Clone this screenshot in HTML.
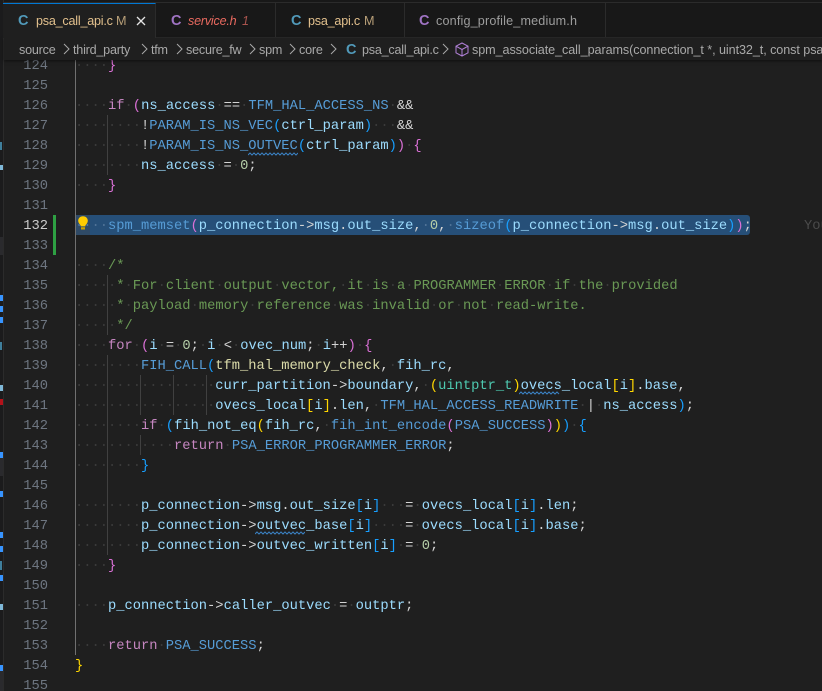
<!DOCTYPE html>
<html><head><meta charset="utf-8"><style>
html,body{margin:0;padding:0;background:#1f1f1f;width:822px;height:691px;overflow:hidden}
#r{position:relative;width:822px;height:691px;overflow:hidden;background:#1f1f1f}
.a{position:absolute}
#code,#nums{position:absolute;top:57px;font:13.75px/20px "Liberation Mono",monospace;color:#d4d4d4}
#code{left:75px;height:634px;overflow:hidden}
#code div{height:20px;white-space:pre}
#nums{left:0;width:48px;height:634px;overflow:hidden;text-align:right;color:#6e7681}
#nums div{height:20px}
#code b{font-weight:normal}
#code i{font-style:normal;color:#3a3a3a}
.sel i{color:#4f7296!important}
.k{color:#c586c0}.m{color:#569cd6}.v{color:#9cdcfe}.f{color:#dcdcaa}.n{color:#b5cea8}.c{color:#6a9955}.t{color:#4ec9b0}.g{color:#ffd700}.p{color:#da70d6}.l{color:#179fff}
.tab{position:absolute;top:3px;height:34px;background:#181818;border-right:1px solid #2b2b2b;box-sizing:border-box}
.tt{position:absolute;top:13px;font:12.6px/16px "Liberation Sans",sans-serif;white-space:pre;letter-spacing:-.22px}
.ic{position:absolute;top:12px;font:bold 14.5px/18px "Liberation Sans",sans-serif}
.bc{position:absolute;top:42px;font:12.6px/16px "Liberation Sans",sans-serif;color:#a9a9a9;white-space:pre;letter-spacing:-.22px}
.gd{position:absolute;width:1px;background:#404040}
.mk{position:absolute;left:0;width:3px;background:#3794ff}
.dm{position:absolute;left:0;width:3px;background:#2a2a2d}
</style></head><body><div id="r">

<!-- tab bar -->
<div class="a" style="left:0;top:0;width:822px;height:37px;background:#181818"></div>
<div class="a" style="left:0;top:2px;width:822px;height:1px;background:#2b2b2b"></div>
<div class="a" style="left:0;top:37px;width:822px;height:1px;background:#2b2b2b"></div>
<div class="tab" style="left:3px;width:153px;background:#1f1f1f;border-top:1px solid #0078d4;height:35px;z-index:1"></div>
<div class="tab" style="left:156px;width:120px"></div>
<div class="tab" style="left:276px;width:129px"></div>
<div class="tab" style="left:405px;width:201px"></div>
<div style="position:absolute;left:0;top:0;width:822px;height:37px;z-index:2">
<span class="ic" style="left:18px;color:#519aba">C</span>
<span class="tt" style="left:36px;color:#e2c08d">psa_call_api.c</span>
<span class="tt" style="left:116px;color:#b89f78">M</span>
<svg class="a" style="left:136px;top:16px" width="10" height="10" viewBox="0 0 10 10"><path d="M1 1L9 9M9 1L1 9" stroke="#e4e4e4" stroke-width="1.3" fill="none"/></svg>
<span class="ic" style="left:171px;color:#a074c4">C</span>
<span class="tt" style="left:188px;color:#e8695f;font-style:italic">service.h</span>
<span class="tt" style="left:242px;color:#a9544e;font-style:italic">1</span>
<span class="ic" style="left:291px;color:#519aba">C</span>
<span class="tt" style="left:308px;color:#e2c08d">psa_api.c</span>
<span class="tt" style="left:364px;color:#b89f78">M</span>
<span class="ic" style="left:419px;color:#a074c4">C</span>
<span class="tt" style="left:436px;color:#9d9d9d;letter-spacing:.17px">config_profile_medium.h</span>
</div>

<!-- left strip -->
<div class="a" style="left:0;top:0;width:3px;height:691px;background:#1b1b1c"></div>
<div class="a" style="left:3px;top:0;width:1px;height:691px;background:#2b2b2b"></div>
<div class="dm" style="top:237px;height:18px"></div>
<div class="dm" style="top:458px;height:18px"></div>
<div class="dm" style="top:671px;height:20px"></div>
<div class="mk" style="top:295px;height:6px"></div>
<div class="mk" style="top:306px;height:6px"></div>
<div class="mk" style="top:317px;height:6px"></div>
<div class="mk" style="top:452px;height:6px"></div>
<div class="mk" style="top:491px;height:6px"></div>
<div class="mk" style="top:532px;height:6px"></div>
<div class="mk" style="top:546px;height:6px"></div>
<div class="mk" style="top:575px;height:6px"></div>
<div class="mk" style="top:665px;height:6px"></div>
<div class="mk" style="top:399px;height:6px;background:#b3121a"></div>
<div class="mk" style="top:142px;height:8px;width:2px;background:#3f7f9c"></div>
<div class="mk" style="top:165px;height:5px;background:#7fb8d8"></div>
<div class="mk" style="top:342px;height:8px;width:2px;background:#3f7f9c"></div>
<div class="mk" style="top:385px;height:6px;background:#7fb8d8"></div>
<div class="mk" style="top:561px;height:9px;width:2px;background:#3f7f9c"></div>
<div class="mk" style="top:604px;height:6px;background:#7fb8d8"></div>

<!-- diff bar -->
<div class="a" style="left:53px;top:215px;width:3px;height:40px;background:#2ea043"></div>

<!-- selection -->
<div class="a" style="left:75px;top:215px;width:675px;height:20px;background:#264f78;border-radius:0 3px 3px 0"></div>

<!-- indent guides -->
<div class="gd" style="left:75px;top:55px;height:600px;background:#707070"></div>
<div class="gd" style="left:107px;top:115px;height:60px"></div>
<div class="gd" style="left:107px;top:275px;height:60px"></div>
<div class="gd" style="left:107px;top:355px;height:200px"></div>
<div class="gd" style="left:140px;top:375px;height:40px"></div>
<div class="gd" style="left:140px;top:435px;height:20px"></div>
<div class="gd" style="left:173px;top:375px;height:40px"></div>
<div class="gd" style="left:206px;top:375px;height:40px"></div>

<!-- bulb -->
<div class="a" style="left:76px;top:215px;width:14px;height:20px;background:#2f4a66"></div>
<svg class="a" style="left:77px;top:215px" width="12" height="16" viewBox="0 0 12 16"><path d="M6 1.2C3 1.2 1.2 3.3 1.2 5.8c0 1.9 1.1 3 1.9 4 .4.5.6 1 .6 1.6h4.6c0-.6.2-1.1.6-1.6.8-1 1.900-2.100 1.900-4C10.800 3.300 9 1.200 6 1.200z" fill="#ffcc00"/><rect x="4" y="12.200" width="4" height="2.300" fill="#c9a200"/></svg>

<!-- line numbers -->
<div id="nums"><div>124</div><div>125</div><div>126</div><div>127</div><div>128</div><div>129</div><div>130</div><div>131</div><div style="color:#cccccc">132</div><div>133</div><div>134</div><div>135</div><div>136</div><div>137</div><div>138</div><div>139</div><div>140</div><div>141</div><div>142</div><div>143</div><div>144</div><div>145</div><div>146</div><div>147</div><div>148</div><div>149</div><div>150</div><div>151</div><div>152</div><div>153</div><div>154</div><div>155</div></div>

<!-- code -->
<div id="code">
<div><i>····</i><b class="p">}</b></div>
<div></div>
<div><i>····</i><b class="k">if</b><i>·</i><b class="p">(</b><b class="v">ns_access</b><i>·</i>==<i>·</i><b class="m">TFM_HAL_ACCESS_NS</b><i>·</i>&amp;&amp;</div>
<div><i>········</i>!<b class="m">PARAM_IS_NS_VEC</b><b class="l">(</b><b class="v">ctrl_param</b><b class="l">)</b><i>···</i>&amp;&amp;</div>
<div><i>········</i>!<b class="m">PARAM_IS_NS_OUTVEC</b><b class="l">(</b><b class="v">ctrl_param</b><b class="l">)</b><b class="p">)</b><i>·</i><b class="p">{</b></div>
<div><i>········</i><b class="v">ns_access</b><i>·</i>=<i>·</i><b class="n">0</b>;</div>
<div><i>····</i><b class="p">}</b></div>
<div></div>
<div class="sel"><i>····</i><b class="m">spm_memset</b><b class="p">(</b><b class="v">p_connection</b>-&gt;<b class="v">msg</b>.<b class="v">out_size</b>,<i>·</i><b class="n">0</b>,<i>·</i><b class="m">sizeof</b><b class="l">(</b><b class="v">p_connection</b>-&gt;<b class="v">msg</b>.<b class="v">out_size</b><b class="l">)</b><b class="p">)</b>;</div>
<div></div>
<div><i>····</i><b class="c">/*</b></div>
<div><i>·····</i><b class="c">*</b><i>·</i><b class="c">For</b><i>·</i><b class="c">client</b><i>·</i><b class="c">output</b><i>·</i><b class="c">vector,</b><i>·</i><b class="c">it</b><i>·</i><b class="c">is</b><i>·</i><b class="c">a</b><i>·</i><b class="c">PROGRAMMER</b><i>·</i><b class="c">ERROR</b><i>·</i><b class="c">if</b><i>·</i><b class="c">the</b><i>·</i><b class="c">provided</b></div>
<div><i>·····</i><b class="c">*</b><i>·</i><b class="c">payload</b><i>·</i><b class="c">memory</b><i>·</i><b class="c">reference</b><i>·</i><b class="c">was</b><i>·</i><b class="c">invalid</b><i>·</i><b class="c">or</b><i>·</i><b class="c">not</b><i>·</i><b class="c">read-write.</b></div>
<div><i>·····</i><b class="c">*/</b></div>
<div><i>····</i><b class="k">for</b><i>·</i><b class="p">(</b><b class="v">i</b><i>·</i>=<i>·</i><b class="n">0</b>;<i>·</i><b class="v">i</b><i>·</i>&lt;<i>·</i><b class="v">ovec_num</b>;<i>·</i><b class="v">i</b>++<b class="p">)</b><i>·</i><b class="p">{</b></div>
<div><i>········</i><b class="m">FIH_CALL</b><b class="l">(</b><b class="f">tfm_hal_memory_check</b>,<i>·</i><b class="v">fih_rc</b>,</div>
<div><i>·················</i><b class="v">curr_partition</b>-&gt;<b class="v">boundary</b>,<i>·</i><b class="g">(</b><b class="t">uintptr_t</b><b class="g">)</b><b class="v">ovecs_local</b><b class="g">[</b><b class="v">i</b><b class="g">]</b>.<b class="v">base</b>,</div>
<div><i>·················</i><b class="v">ovecs_local</b><b class="g">[</b><b class="v">i</b><b class="g">]</b>.<b class="v">len</b>,<i>·</i><b class="m">TFM_HAL_ACCESS_READWRITE</b><i>·</i>|<i>·</i><b class="v">ns_access</b><b class="l">)</b>;</div>
<div><i>········</i><b class="k">if</b><i>·</i><b class="l">(</b><b class="v">fih_not_eq</b><b class="g">(</b><b class="v">fih_rc</b>,<i>·</i><b class="m">fih_int_encode</b><b class="p">(</b><b class="m">PSA_SUCCESS</b><b class="p">)</b><b class="g">)</b><b class="l">)</b><i>·</i><b class="l">{</b></div>
<div><i>············</i><b class="k">return</b><i>·</i><b class="m">PSA_ERROR_PROGRAMMER_ERROR</b>;</div>
<div><i>········</i><b class="l">}</b></div>
<div></div>
<div><i>········</i><b class="v">p_connection</b>-&gt;<b class="v">msg</b>.<b class="v">out_size</b><b class="l">[</b><b class="v">i</b><b class="l">]</b><i>···</i>=<i>·</i><b class="v">ovecs_local</b><b class="l">[</b><b class="v">i</b><b class="l">]</b>.<b class="v">len</b>;</div>
<div><i>········</i><b class="v">p_connection</b>-&gt;<b class="v">outvec_base</b><b class="l">[</b><b class="v">i</b><b class="l">]</b><i>····</i>=<i>·</i><b class="v">ovecs_local</b><b class="l">[</b><b class="v">i</b><b class="l">]</b>.<b class="v">base</b>;</div>
<div><i>········</i><b class="v">p_connection</b>-&gt;<b class="v">outvec_written</b><b class="l">[</b><b class="v">i</b><b class="l">]</b><i>·</i>=<i>·</i><b class="n">0</b>;</div>
<div><i>····</i><b class="p">}</b></div>
<div></div>
<div><i>····</i><b class="v">p_connection</b>-&gt;<b class="v">caller_outvec</b><i>·</i>=<i>·</i><b class="v">outptr</b>;</div>
<div></div>
<div><i>····</i><b class="k">return</b><i>·</i><b class="m">PSA_SUCCESS</b>;</div>
<div><b class="g">}</b></div>
<div></div>
</div>

<!-- ghost blame -->
<div class="a" style="left:804px;top:217px;font:13.75px/20px 'Liberation Mono',monospace;color:#4b4b4b;white-space:pre">You</div>

<!-- squiggles -->
<svg class="a" style="left:248px;top:152px" width="50" height="4"><path d="M0 3L2 1L4 3L6 1L8 3L10 1L12 3L14 1L16 3L18 1L20 3L22 1L24 3L26 1L28 3L30 1L32 3L34 1L36 3L38 1L40 3L42 1L44 3L46 1L48 3L50 1" stroke="#3b82c4" fill="none"/></svg>
<svg class="a" style="left:519px;top:391px" width="41" height="4"><path d="M0 3L2 1L4 3L6 1L8 3L10 1L12 3L14 1L16 3L18 1L20 3L22 1L24 3L26 1L28 3L30 1L32 3L34 1L36 3L38 1L40 3" stroke="#3b82c4" fill="none"/></svg>
<svg class="a" style="left:255px;top:531px" width="50" height="4"><path d="M0 3L2 1L4 3L6 1L8 3L10 1L12 3L14 1L16 3L18 1L20 3L22 1L24 3L26 1L28 3L30 1L32 3L34 1L36 3L38 1L40 3L42 1L44 3L46 1L48 3L50 1" stroke="#3b82c4" fill="none"/></svg>

<!-- breadcrumb -->
<div class="a" style="left:4px;top:38px;width:818px;height:22px;background:#1f1f1f;box-shadow:0 1px 3px rgba(0,0,0,.55)"></div>
<div class="bc" style="left:19px">source</div>
<div class="bc" style="left:73px">third_party</div>
<div class="bc" style="left:151px">tfm</div>
<div class="bc" style="left:186px">secure_fw</div>
<div class="bc" style="left:259px">spm</div>
<div class="bc" style="left:299px">core</div>
<div class="ic" style="left:346px;top:41px;color:#519aba">C</div>
<div class="bc" style="left:362px">psa_call_api.c</div>
<div class="bc" style="left:472px;width:350px;overflow:hidden;letter-spacing:-.07px">spm_associate_call_params(connection_t *, uint32_t, const psa_</div>
<svg class="a" style="left:0;top:38px" width="460" height="22" fill="none" stroke="#a9a9a9" stroke-width="1"><path d="M64 6L69 11L64 16M142 6L147 11L142 16M177 6L182 11L177 16M250 6L255 11L250 16M290 6L295 11L290 16M331 6L336 11L331 16M443 6L448 11L443 16"/></svg>
<svg class="a" style="left:455px;top:42px" width="14" height="15" viewBox="0 0 14 15" fill="none" stroke="#b180d7" stroke-width="1"><path d="M7 1L13 4.200V10.800L7 14L1 10.800V4.200ZM1 4.200L7 7.500L13 4.200M7 7.500V14"/></svg>

</div></body></html>
